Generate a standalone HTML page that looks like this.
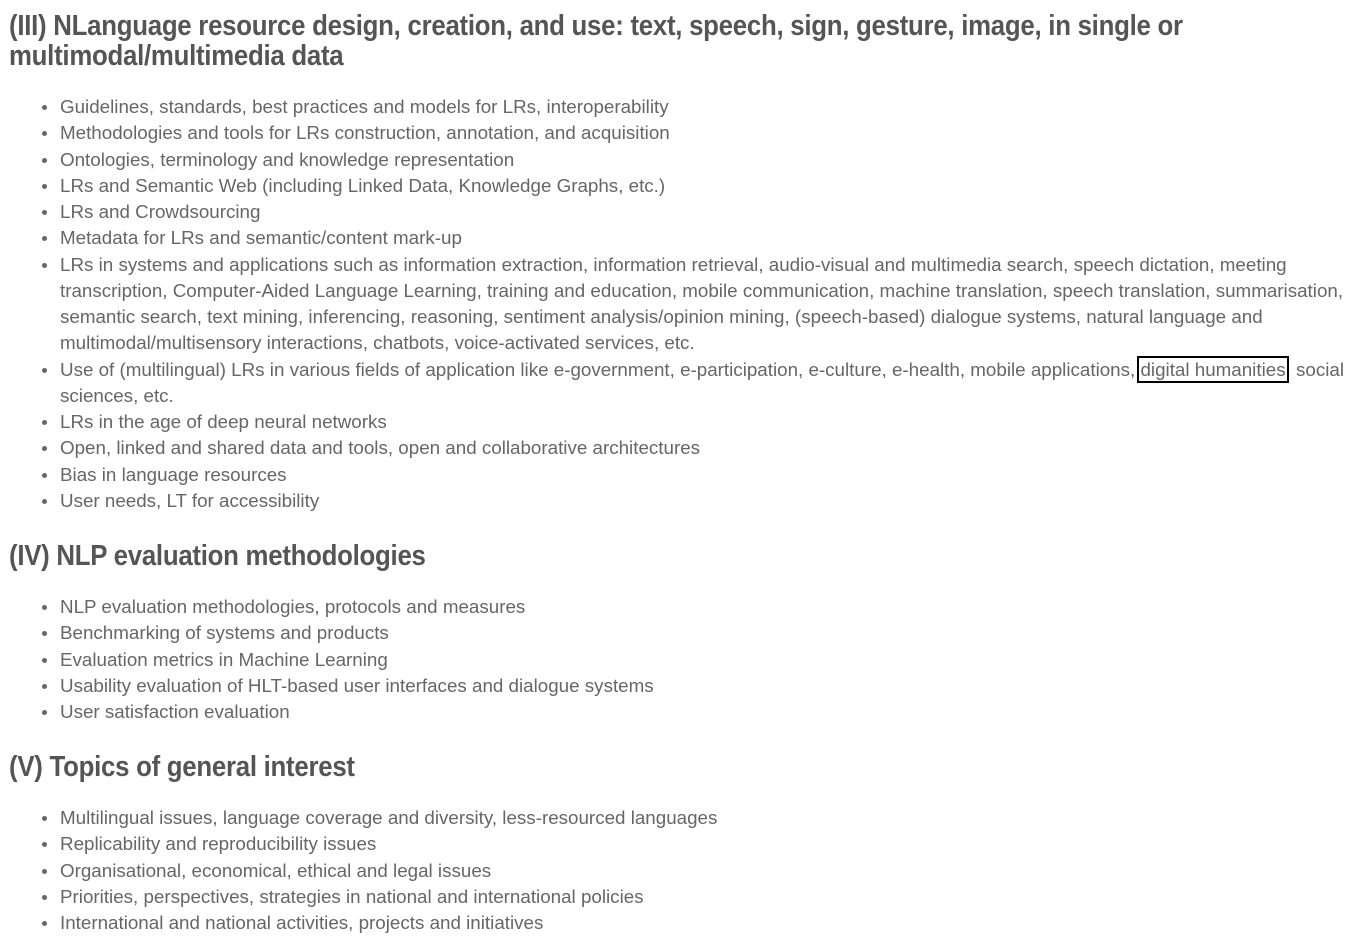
<!DOCTYPE html>
<html><head><meta charset="utf-8"><style>
body{margin:0;background:#fff;width:1372px;height:935px;overflow:hidden;position:relative;font-family:"Liberation Sans",sans-serif}
h2{position:absolute;left:9px;margin:0;font-family:"Liberation Sans",sans-serif;font-weight:bold;font-size:29px;line-height:30px;color:#555;letter-spacing:-0.3px;white-space:nowrap;transform:scaleX(0.89);transform-origin:0 0}
ul{position:absolute;left:0;margin:0;padding:0 0 0 60px;list-style:none;font-size:18.8px;line-height:26.25px;color:#666;white-space:nowrap}
li{position:relative}
li:before{content:"";position:absolute;left:-18px;top:11px;width:5px;height:5px;border-radius:50%;background:#666}
.box{outline:2px solid #000;outline-offset:1px}
</style></head><body>
<h2 style="top:11px">(III) NLanguage resource design, creation, and use: text, speech, sign, gesture, image, in single or<br>multimodal/multimedia data</h2>
<ul style="top:94px">
<li>Guidelines, standards, best practices and models for LRs, interoperability</li>
<li>Methodologies and tools for LRs construction, annotation, and acquisition</li>
<li>Ontologies, terminology and knowledge representation</li>
<li>LRs and Semantic Web (including Linked Data, Knowledge Graphs, etc.)</li>
<li>LRs and Crowdsourcing</li>
<li>Metadata for LRs and semantic/content mark-up</li>
<li>LRs in systems and applications such as information extraction, information retrieval, audio-visual and multimedia search, speech dictation, meeting<br>transcription, Computer-Aided Language Learning, training and education, mobile communication, machine translation, speech translation, summarisation,<br>semantic search, text mining, inferencing, reasoning, sentiment analysis/opinion mining, (speech-based) dialogue systems, natural language and<br>multimodal/multisensory interactions, chatbots, voice-activated services, etc.</li>
<li>Use of (multilingual) LRs in various fields of application like e-government, e-participation, e-culture, e-health, mobile applications, <span class="box">digital humanities</span>, social<br>sciences, etc.</li>
<li>LRs in the age of deep neural networks</li>
<li>Open, linked and shared data and tools, open and collaborative architectures</li>
<li>Bias in language resources</li>
<li>User needs, LT for accessibility</li>
</ul>
<h2 style="top:541px">(IV) NLP evaluation methodologies</h2>
<ul style="top:594px">
<li>NLP evaluation methodologies, protocols and measures</li>
<li>Benchmarking of systems and products</li>
<li>Evaluation metrics in Machine Learning</li>
<li>Usability evaluation of HLT-based user interfaces and dialogue systems</li>
<li>User satisfaction evaluation</li>
</ul>
<h2 style="top:752px">(V) Topics of general interest</h2>
<ul style="top:805px">
<li>Multilingual issues, language coverage and diversity, less-resourced languages</li>
<li>Replicability and reproducibility issues</li>
<li>Organisational, economical, ethical and legal issues</li>
<li>Priorities, perspectives, strategies in national and international policies</li>
<li>International and national activities, projects and initiatives</li>
</ul>
</body></html>
